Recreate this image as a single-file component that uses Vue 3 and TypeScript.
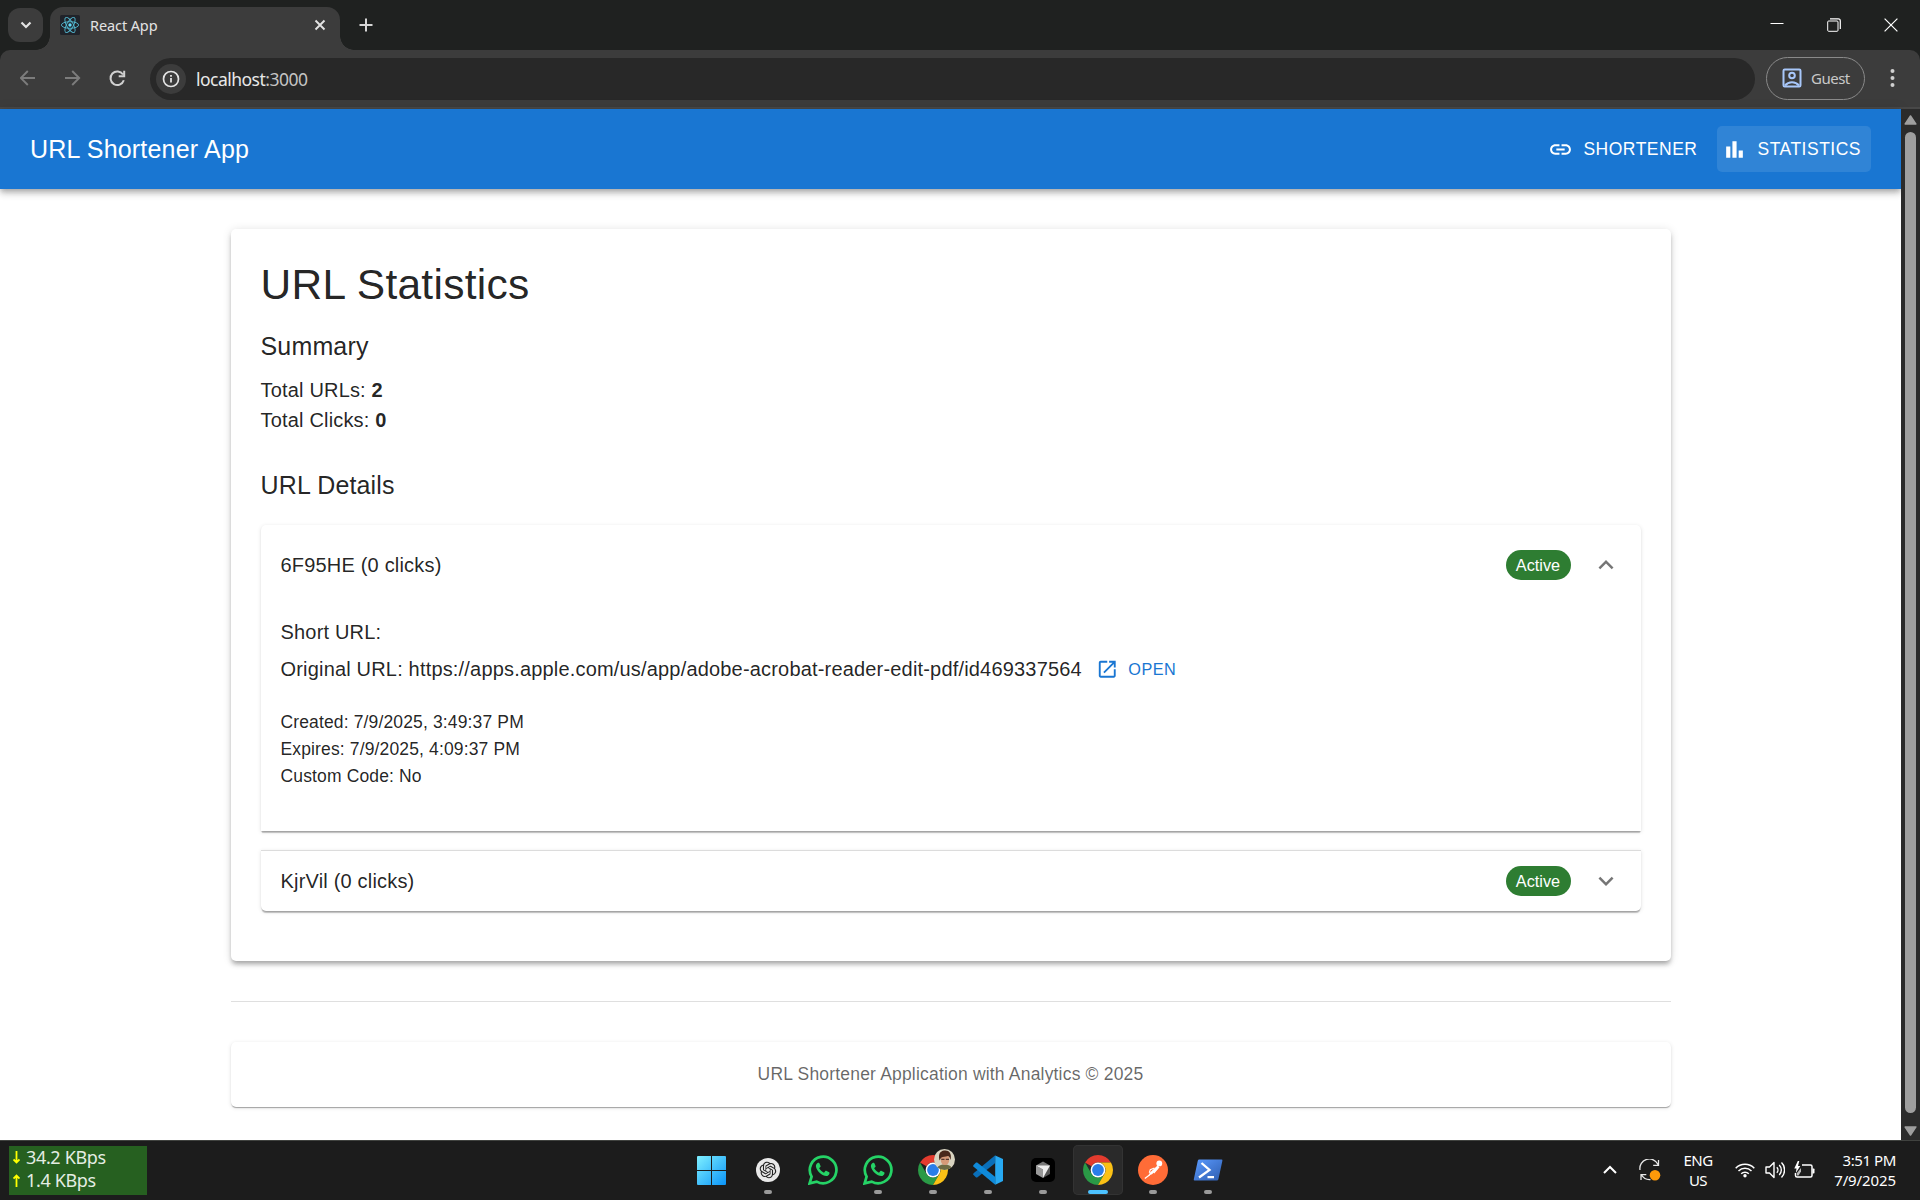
<script setup lang="ts">
import { ref } from 'vue'

interface UrlEntry {
  code: string
  clicks: number
  original: string
  created: string
  expires: string
  custom: boolean
  expanded: boolean
}

interface TaskItem {
  id: string
  icon: string
  running?: boolean
  active?: boolean
}

const urls = ref<UrlEntry[]>([
  {
    code: '6F95HE',
    clicks: 0,
    original: 'https://apps.apple.com/us/app/adobe-acrobat-reader-edit-pdf/id469337564',
    created: '7/9/2025, 3:49:37 PM',
    expires: '7/9/2025, 4:09:37 PM',
    custom: false,
    expanded: true,
  },
  {
    code: 'KjrVil',
    clicks: 0,
    original: '',
    created: '',
    expires: '',
    custom: false,
    expanded: false,
  },
])

const tasks: TaskItem[] = [
  { id: 'start', icon: 'windows' },
  { id: 'chatgpt', icon: 'openai', running: true },
  { id: 'wa1', icon: 'whatsapp' },
  { id: 'wa2', icon: 'whatsapp', running: true },
  { id: 'chrome-profile', icon: 'chrome-profile', running: true },
  { id: 'vscode', icon: 'vscode', running: true },
  { id: 'cursor', icon: 'cursor', running: true },
  { id: 'chrome', icon: 'chrome', running: true, active: true },
  { id: 'postman', icon: 'postman', running: true },
  { id: 'powershell', icon: 'powershell', running: true },
]
</script>

<template>
  <div class="screen">
    <!-- Browser tab strip -->
    <div class="tabstrip">
      <div class="tab-search">
        <svg width="12" height="8" viewBox="0 0 12 8"><path d="M1.5 1.5 6 6l4.500-4.500" fill="none" stroke="#e3e3e3" stroke-width="2.200" /></svg>
      </div>
      <div class="tab">
        <svg class="favicon" width="20" height="20" viewBox="0 0 20 20">
          <rect width="20" height="20" rx="1.500" fill="#20232a" />
          <g fill="none" stroke="#53b9d1" stroke-width="0.900">
            <ellipse cx="10" cy="10" rx="8.600" ry="3.300" />
            <ellipse cx="10" cy="10" rx="8.600" ry="3.300" transform="rotate(60 10 10)" />
            <ellipse cx="10" cy="10" rx="8.600" ry="3.300" transform="rotate(120 10 10)" />
          </g>
          <circle cx="10" cy="10" r="1.700" fill="#61dafb" />
        </svg>
        <span class="tab-title">React App</span>
        <svg class="tab-close" width="12" height="12" viewBox="0 0 12 12"><path d="M1.500 1.500l9 9M10.500 1.500l-9 9" stroke="#e3e3e3" stroke-width="1.900" /></svg>
      </div>
      <svg class="new-tab" width="14" height="14" viewBox="0 0 14 14"><path d="M7 .5v13M.5 7h13" stroke="#d6d6d6" stroke-width="2" /></svg>
      <div class="window-controls">
        <svg width="14" height="14" viewBox="0 0 14 14"><path d="M.5 5.500h13" stroke="#fff" /></svg>
        <svg width="14" height="14" viewBox="0 0 14 14" fill="none" stroke="#fff"><rect x=".7" y="3" width="10.300" height="10.300" rx="1" /><path d="M3 .9h8.300a2 2 0 0 1 2 2v8" stroke-width="1.200" /></svg>
        <svg width="14" height="14" viewBox="0 0 14 14"><path d="M.6.6l12.800 12.800M13.400.6.600 13.400" stroke="#fff" stroke-width="1.200" /></svg>
      </div>
    </div>

    <!-- Address bar -->
    <div class="toolbar">
      <svg class="nav-icon" width="16" height="16" viewBox="0 0 16 16" fill="none" stroke="#7c7c7c" stroke-width="1.900"><path d="M15 8H1.500M7.800 1 .8 8l7 7" /></svg>
      <svg class="nav-icon" width="16" height="16" viewBox="0 0 16 16" fill="none" stroke="#7c7c7c" stroke-width="1.900"><path d="M0 8H13.500M7.200 1l7 7-7 7" /></svg>
      <svg class="nav-icon reload" width="17" height="17" viewBox="0 0 17 17" fill="none" stroke="#d0d0d0" stroke-width="2"><path d="M14.800 10.300A6.800 6.800 0 1 1 14 4.500M15.200 .8v5.400H9.700" /></svg>
      <div class="omnibox">
        <span class="site-info">
          <svg width="18" height="18" viewBox="0 0 18 18"><circle cx="9" cy="9" r="7.500" fill="none" stroke="#e3e3e3" stroke-width="1.700" /><path d="M9 8v4.500M9 5v1.800" stroke="#e3e3e3" stroke-width="1.800" /></svg>
        </span>
        <span class="url">localhost<span class="port">:3000</span></span>
      </div>
      <div class="guest">
        <svg width="20" height="20" viewBox="0 0 20 20" fill="none" stroke="#a8c7fa" stroke-width="2"><rect x="1.500" y="1.500" width="17" height="17" rx="1.200" /><circle cx="10" cy="7.500" r="2.800" /><path d="M3 17.500c2-2.400 4.200-3.200 7-3.200s5 .8 7 3.200" /></svg>
        <span>Guest</span>
      </div>
      <svg class="more" width="5" height="20" viewBox="0 0 5 20" fill="#d0d0d0"><circle cx="2.500" cy="3" r="2" /><circle cx="2.500" cy="10" r="2" /><circle cx="2.500" cy="17" r="2" /></svg>
    </div>

    <div class="viewport">
      <main class="page">
        <header class="appbar">
          <span class="brand">URL Shortener App</span>
          <button class="nav-btn">
            <svg width="25" height="25" viewBox="0 0 24 24" fill="#fff"><path d="M3.900 12c0-1.710 1.390-3.100 3.100-3.100h4V7H7c-2.760 0-5 2.240-5 5s2.240 5 5 5h4v-1.900H7c-1.710 0-3.100-1.390-3.100-3.100zM8 13h8v-2H8v2zm9-6h-4v1.900h4c1.710 0 3.100 1.390 3.100 3.100s-1.390 3.100-3.100 3.100h-4V17h4c2.760 0 5-2.240 5-5s-2.240-5-5-5z" /></svg>
            SHORTENER
          </button>
          <button class="nav-btn selected">
            <svg width="25" height="25" viewBox="0 0 24 24" fill="#fff"><path d="M4 9h4v11H4zm12 4h4v7h-4zm-6-9h4v16h-4z" /></svg>
            STATISTICS
          </button>
        </header>

        <div class="container">
          <section class="card">
            <h1>URL Statistics</h1>
            <h2>Summary</h2>
            <p class="body">Total URLs: <strong>2</strong></p>
            <p class="body">Total Clicks: <strong>0</strong></p>
            <h2 class="details-title">URL Details</h2>

            <div class="accordions">
              <article v-for="u in urls" :key="u.code" class="accordion" :class="{ expanded: u.expanded }">
                <div class="summary" @click="u.expanded = !u.expanded">
                  <span class="summary-title">{{ u.code }} ({{ u.clicks }} clicks)</span>
                  <span class="chip">Active</span>
                  <svg class="chevron" width="30" height="30" viewBox="0 0 24 24"><path d="M16.590 8.590 12 13.170 7.410 8.590 6 10l6 6 6-6z" /></svg>
                </div>
                <div v-if="u.expanded" class="details">
                  <p class="body">Short URL:</p>
                  <div class="original">
                    <p class="body">Original URL: {{ u.original }}</p>
                    <button class="open-btn">
                      <svg width="22.500" height="22.500" viewBox="0 0 24 24" fill="#1976d2"><path d="M19 19H5V5h7V3H5c-1.110 0-2 .9-2 2v14c0 1.100.890 2 2 2h14c1.100 0 2-.9 2-2v-7h-2v7zM14 3v2h3.590l-9.830 9.830 1.410 1.410L19 6.410V10h2V3h-7z" /></svg>
                      OPEN
                    </button>
                  </div>
                  <div class="meta">
                    <p>Created: {{ u.created }}</p>
                    <p>Expires: {{ u.expires }}</p>
                    <p>Custom Code: {{ u.custom ? 'Yes' : 'No' }}</p>
                  </div>
                </div>
              </article>
            </div>
          </section>

          <hr class="divider" />
          <footer class="footer">URL Shortener Application with Analytics © 2025</footer>
        </div>
      </main>
      <div class="scrollbar">
        <svg width="13" height="10" viewBox="0 0 13 10"><path d="M6.500 1 11.800 9H1.200z" fill="#9f9f9f" stroke="#9f9f9f" stroke-width="1.500" stroke-linejoin="round" /></svg>
        <div class="thumb"></div>
        <svg width="13" height="10" viewBox="0 0 13 10"><path d="M6.500 9 11.800 1H1.200z" fill="#9f9f9f" stroke="#9f9f9f" stroke-width="1.500" stroke-linejoin="round" /></svg>
      </div>
    </div>

    <!-- Windows taskbar -->
    <div class="taskbar">
      <div class="netmeter">
        <div><svg width="7" height="13" viewBox="0 0 7 13"><path d="M3.500 0v11M.5 8.500l3 3 3-3" fill="none" stroke="#ff0" stroke-width="1.800" /></svg>34.2 KBps</div>
        <div><svg width="7" height="13" viewBox="0 0 7 13"><path d="M3.500 13V2M.5 4.500l3-3 3 3" fill="none" stroke="#ff0" stroke-width="1.800" /></svg>1.4 KBps</div>
      </div>
      <div class="tasks">
        <div v-for="t in tasks" :key="t.id" class="task" :class="[t.id, { active: t.active, running: t.running }]">
          <svg v-if="t.icon === 'windows'" width="29" height="29" viewBox="0 0 29 29">
            <defs><linearGradient id="win" x1="0" y1="0" x2="1" y2="1" gradientUnits="objectBoundingBox"><stop offset="0" stop-color="#7ff0ff" /><stop offset="1" stop-color="#0a94f8" /></linearGradient></defs>
            <path d="M1 0h13v14H0V1a1 1 0 0 1 1-1zM15 0h13a1 1 0 0 1 1 1v13H15zM0 15h14v14H1a1 1 0 0 1-1-1zM15 15h14v13a1 1 0 0 1-1 1H15z" fill="url(#win)" />
          </svg>
          <svg v-else-if="t.icon === 'openai'" width="24" height="24" viewBox="0 0 24 24">
            <circle cx="12" cy="12" r="12" fill="#e9e9e9" />
            <g transform="translate(3.700 3.700) scale(.69)"><path fill="#222" d="M22.282 9.821a5.985 5.985 0 0 0-.516-4.911 6.046 6.046 0 0 0-6.510-2.900A6.065 6.065 0 0 0 4.981 4.182a5.985 5.985 0 0 0-3.998 2.900 6.046 6.046 0 0 0 .743 7.097 5.980 5.980 0 0 0 .511 4.911 6.051 6.051 0 0 0 6.515 2.900A5.985 5.985 0 0 0 13.260 24a6.056 6.056 0 0 0 5.772-4.206 5.989 5.989 0 0 0 3.998-2.900 6.056 6.056 0 0 0-.748-7.073zm-9.022 12.608a4.476 4.476 0 0 1-2.876-1.041l.142-.080 4.778-2.758a.795.795 0 0 0 .393-.681v-6.737l2.020 1.169a.071.071 0 0 1 .038.052v5.583a4.504 4.504 0 0 1-4.495 4.494zm-9.661-4.125a4.471 4.471 0 0 1-.535-3.014l.142.085 4.783 2.758a.771.771 0 0 0 .781 0l5.843-3.369v2.332a.080.080 0 0 1-.033.062L9.740 19.950a4.499 4.499 0 0 1-6.141-1.646zM2.341 7.896a4.485 4.485 0 0 1 2.366-1.973V11.600a.766.766 0 0 0 .388.677l5.814 3.354-2.020 1.169a.076.076 0 0 1-.071 0l-4.830-2.787A4.504 4.504 0 0 1 2.341 7.872zm16.596 3.856L13.104 8.364 15.119 7.200a.076.076 0 0 1 .071 0l4.830 2.791a4.494 4.494 0 0 1-.677 8.104v-5.677a.790.790 0 0 0-.407-.667zm2.011-3.023l-.142-.085-4.774-2.782a.776.776 0 0 0-.785 0L9.409 9.230V6.897a.066.066 0 0 1 .028-.062l4.830-2.787a4.499 4.499 0 0 1 6.680 4.660zM8.307 12.863l-2.020-1.164a.080.080 0 0 1-.038-.057V6.074a4.499 4.499 0 0 1 7.376-3.454l-.142.081L8.704 5.459a.795.795 0 0 0-.393.681zm1.098-2.365l2.602-1.500 2.607 1.500v2.999l-2.597 1.500-2.607-1.500z" /></g>
          </svg>
          <svg v-else-if="t.icon === 'whatsapp'" width="30" height="30" viewBox="0 0 30 30">
            <path d="M1.600 28.400 3.600 21.600A13.300 13.300 0 1 1 8.700 26.600z" fill="none" stroke="#25d366" stroke-width="2.700" />
            <path transform="translate(5.300 5) scale(.78)" fill="#25d366" d="M7.500 10.500c1.300 2.400 3.500 4.500 6.200 5.700l1.800-2.100c.3-.4.7-.4 1.100-.2l3.700 1.800c.5.300.6.6.5 1.200-.4 2.400-2.200 3.600-4.100 3.700C11.800 20.600 3.900 14.200 3.300 8c0-2 1-3.500 2.300-4.200.5-.2 1.300-.2 1.800 0 .4.200.5.500.7.900l1.200 3c.2.400.1.700-.1 1z" />
          </svg>
          <svg v-else-if="t.icon === 'chrome' || t.icon === 'chrome-profile'" width="30" height="30" viewBox="0 0 30 30">
            <path d="M2.010 7.500A15 15 0 0 1 27.990 7.500H15A7.500 7.500 0 0 0 8.500 11.250z" fill="#e33b2e" />
            <path d="M2.010 7.500A15 15 0 0 0 15 30L21.500 18.750A7.500 7.500 0 0 1 8.500 18.750z" fill="#2a9a46" />
            <path d="M27.990 7.500A15 15 0 0 1 15 30L21.500 18.750A7.500 7.500 0 0 0 15 7.500z" fill="#fbc116" />
            <circle cx="15" cy="15" r="7.400" fill="#fff" /><circle cx="15" cy="15" r="5.900" fill="#2b7de9" />
          </svg>
          <svg v-else-if="t.icon === 'vscode'" width="30" height="30" viewBox="0 0 30 30">
            <path d="M22.200.5 30 4v22l-7.800 3.700z" fill="#27a9f2" />
            <path d="M22.200.3 22 8.300 4.500 22.200c-.6.400-1.200.4-1.700 0L.6 20.100c-.6-.6-.6-1.300 0-1.900z" fill="#0a6fb9" />
            <path d="M22.200 29.700 22 21.700 4.500 7.800c-.6-.4-1.200-.4-1.700 0L.6 9.900c-.6.6-.6 1.300 0 1.900z" fill="#0f8ada" />
          </svg>
          <svg v-else-if="t.icon === 'cursor'" width="24" height="24" viewBox="0 0 24 24">
            <rect width="24" height="24" rx="5" fill="#000" />
            <path d="M12 3.500 19 7.500 12 11.500 5 7.500z" fill="#777" /><path d="M5 7.500 12 11.500V20l-7-4z" fill="#999" /><path d="M19 7.500v8.500L12 20v-8.500z" fill="#555" /><path d="M5 7.500h14L12 20v-8.500z" fill="#eee" />
          </svg>
          <svg v-else-if="t.icon === 'postman'" width="30" height="30" viewBox="0 0 30 30">
            <circle cx="15" cy="15" r="15" fill="#ff6c37" /><circle cx="21.300" cy="8.400" r="2.900" fill="#fff" />
            <path d="M19.800 10.200 12 17.600l-1.700 3.200 3.700-1.500 7.500-6.800z" fill="#fff" /><path d="M11.800 19.800 6.800 23.500M16.500 13l-4.200 1.700-1 3M20 13l-4.200 5" stroke="#fff" stroke-width="1.200" fill="none" />
          </svg>
          <svg v-else width="30" height="24" viewBox="0 0 30 24">
            <defs><linearGradient id="ps" x1="0" y1="0" x2="1" y2="1"><stop offset="0" stop-color="#5b9bff" /><stop offset="1" stop-color="#2d5cae" /></linearGradient></defs>
            <path d="M6.300 1.500h22.200q1.200 0 .9 1.200l-4 18.600q-.3 1.200-1.500 1.200H1.700q-1.200 0-.9-1.200l4-18.600q.3-1.200 1.500-1.200z" fill="url(#ps)" />
            <path d="M8.500 5l8 7-10.500 7.500M14.500 19.200h6.500" stroke="#fff" stroke-width="2.300" fill="none" />
          </svg>
          <svg v-if="t.icon === 'chrome-profile'" class="avatar" width="21" height="21" viewBox="0 0 21 21">
            <clipPath id="av"><circle cx="10.500" cy="10.500" r="10.500" /></clipPath>
            <g clip-path="url(#av)"><rect width="21" height="21" fill="#d8d3c0" /><path d="M2.500 21c.5-4 4-5.500 8-5.500s7.500 1.500 8 5.500z" fill="#6d6b43" /><ellipse cx="11" cy="10.500" rx="4.300" ry="5.500" fill="#d69a78" /><path d="M5.500 11.500C3.500 3 8 1.500 11.500 1.500s6.500 3 5 9.500c-.7-2.500-1.200-3.500-2.500-4-3 1-5 .5-6.500 1.500-1 .7-1 1.800-2 3z" fill="#49291b" /><path d="M7.300 10.300h3.200M11.800 10.300H15" stroke="#55372d" stroke-width="1.300" /></g>
          </svg>
          <i v-if="t.running" class="indicator"></i>
        </div>
      </div>
      <div class="tray">
        <svg class="t-up" width="14" height="9" viewBox="0 0 14 9"><path d="M1 8l6-6 6 6" fill="none" stroke="#fff" stroke-width="2" /></svg>
        <svg class="t-sync" width="22" height="22" viewBox="0 0 22 22"><g fill="none" stroke="#e8e8e8" stroke-width="1.300"><path d="M1 11A9.500 9.500 0 0 1 19 5.500M19.500 1v5.300h-5.300M2 21v-5.300h5.300M2.500 16a9.500 9.500 0 0 0 9 4.500" /></g><circle cx="16" cy="16.200" r="5.300" fill="#ff9a0a" /></svg>
        <div class="lang"><span>ENG</span><span>US</span></div>
        <svg class="t-wifi" width="20" height="16" viewBox="0 0 20 16"><g fill="none" stroke="#fff" stroke-width="1.500"><path d="M.7 6.200a13 13 0 0 1 18.600 0M3.500 9a9.200 9.200 0 0 1 13 0M6.200 11.800a5.400 5.400 0 0 1 7.600 0" /></g><circle cx="10" cy="13.800" r="1.700" fill="#fff" /></svg>
        <svg class="t-vol" width="20" height="18" viewBox="0 0 20 18"><g fill="none" stroke="#fff" stroke-width="1.400" stroke-linejoin="round"><path d="M1 6h3.500L9 1.500v15L4.500 12H1zM11.800 6.200a4 4 0 0 1 0 5.600M14.200 3.900a7.200 7.200 0 0 1 0 10.200M16.500 1.600a10.500 10.500 0 0 1 0 14.800" /></g></svg>
        <svg class="t-bat" width="21" height="18" viewBox="0 0 21 18"><path d="M8 4h8.500q1.500 0 1.500 1.500v9q0 1.500-1.500 1.500H3q-1.500 0-1.500-1.500V12" fill="none" stroke="#fff" stroke-width="1.500" /><path d="M18.500 7.500h1.200q.8 0 .8.800v3.400q0 .8-.8.800h-1.200z" fill="#fff" /><path d="M3.800 0 .3 7.500h2.200L1.800 12 6.300 5H4L5.300 0z" fill="#fff" /><path d="M3 14.500V12l4-5v3.500L4.500 14.500z" fill="#bbb" /></svg>
        <div class="clock"><span>3:51 PM</span><span class="date">7/9/2025</span></div>
      </div>
    </div>
  </div>
</template>

<style>
body {
  margin: 0;
  overflow: hidden;
}
</style>

<style scoped>
.screen {
  width: 1920px;
  height: 1200px;
  display: flex;
  flex-direction: column;
  overflow: hidden;
  font-family: "Liberation Sans", Arial, sans-serif;
  background: #1f2120;
}
svg {
  display: block;
  flex: none;
}
.tabstrip,
.toolbar,
.taskbar {
  font-family: "Noto Sans", "Open Sans", sans-serif;
}

/* tab strip */
.tabstrip {
  height: 50px;
  display: flex;
  flex: none;
  align-items: flex-start;
  background: #1f2120;
}
.tab-search {
  width: 35px;
  height: 34px;
  margin: 8px 7px 0 8px;
  border-radius: 12px;
  background: #3c3c3c;
  display: flex;
  align-items: center;
  justify-content: center;
}
.tab {
  position: relative;
  box-sizing: border-box;
  width: 290px;
  height: 43px;
  margin-top: 7px;
  padding: 0 14px 7px 10px;
  border-radius: 13px 13px 0 0;
  background: #3c3c3c;
  display: flex;
  align-items: center;
}
.tab::before,
.tab::after {
  content: "";
  position: absolute;
  bottom: 0;
  width: 14px;
  height: 14px;
}
.tab::before {
  left: -14px;
  background: radial-gradient(circle at 0 0, transparent 13.500px, #3c3c3c 14px);
}
.tab::after {
  right: -14px;
  background: radial-gradient(circle at 100% 0, transparent 13.500px, #3c3c3c 14px);
}
.tab-title {
  margin-left: 10px;
  flex: 1;
  font-size: 14.500px;
  letter-spacing: -0.100px;
  color: #e3e3e3;
}
.new-tab {
  margin: 18px 0 0 19px;
}
.window-controls {
  margin: 18px 22px 0 auto;
  display: flex;
  gap: 43px;
}

/* toolbar */
.toolbar {
  box-sizing: border-box;
  height: 59px;
  flex: none;
  display: flex;
  align-items: center;
  padding: 0 25px 1px 20px;
  border-bottom: 2px solid #484848;
  border-radius: 10px 10px 0 0;
  background: #3c3c3c;
}
.nav-icon {
  margin-right: 29px;
}
.nav-icon.reload {
  margin-left: -1px;
  margin-right: 24px;
}
.omnibox {
  box-sizing: border-box;
  flex: 1;
  height: 42px;
  margin-top: 2px;
  padding-left: 6px;
  border-radius: 21px;
  background: #282828;
  display: flex;
  align-items: center;
}
.site-info {
  width: 30px;
  height: 30px;
  border-radius: 50%;
  background: #3c3c3c;
  display: flex;
  align-items: center;
  justify-content: center;
}
.url {
  margin-left: 10px;
  font-size: 17.500px;
  letter-spacing: -0.520px;
  color: #e8e8e8;
}
.port {
  color: #c4c4c4;
}
.guest {
  box-sizing: border-box;
  width: 99px;
  height: 43px;
  margin: 1px 25px 0 11px;
  padding: 0 0 1px 15px;
  border: 1px solid #8a8a8a;
  border-radius: 22px;
  display: flex;
  align-items: center;
  gap: 9px;
  font-size: 15px;
  letter-spacing: -0.500px;
  color: #c8c8c8;
}

/* web page */
.viewport {
  height: 1031px;
  flex: none;
  display: flex;
}
.page {
  width: 1901px;
  background: #fff;
  color: rgba(0, 0, 0, 0.87);
}
.appbar {
  box-sizing: border-box;
  height: 80px;
  padding: 0 30px;
  display: flex;
  align-items: center;
  gap: 10px;
  background: #1976d2;
  color: #fff;
  box-shadow: 0 2.500px 5px -1px rgba(0, 0, 0, 0.2), 0 5px 6px 0 rgba(0, 0, 0, 0.14), 0 1px 12px 0 rgba(0, 0, 0, 0.12);
}
.brand {
  flex: 1;
  font-size: 25px;
  line-height: 40px;
  letter-spacing: 0.188px;
}
button {
  border: 0;
  background: none;
  font-family: inherit;
  display: flex;
  align-items: center;
  white-space: nowrap;
}
.nav-btn {
  height: 46px;
  padding: 1px 10px 0 5px;
  gap: 10px;
  border-radius: 5px;
  font-size: 17.500px;
  letter-spacing: 0.500px;
  color: #fff;
}
.nav-btn.selected {
  background: rgba(255, 255, 255, 0.1);
}
.container {
  width: 1440px;
  margin: 0 auto;
  padding-top: 40px;
}
.card {
  box-sizing: border-box;
  height: 732px;
  padding: 30px;
  border-radius: 5px;
  background: #fff;
  box-shadow: 0 4px 4px -2.500px rgba(0, 0, 0, 0.2), 0 4px 5px 0 rgba(0, 0, 0, 0.14), 0 1px 10px 0 rgba(0, 0, 0, 0.12);
}
h1,
h2,
p {
  margin: 0;
  font-weight: 400;
}
h1 {
  font-size: 42.500px;
  line-height: 51.500px;
  letter-spacing: 0.260px;
  margin-bottom: 15px;
}
h2 {
  font-size: 25px;
  line-height: 40px;
  letter-spacing: 0.160px;
  margin-bottom: 9.500px;
}
.body {
  font-size: 20px;
  line-height: 30px;
  letter-spacing: 0.180px;
}
.details-title {
  margin-top: 30px;
  margin-bottom: 20px;
}
.accordion {
  border-radius: 0;
  background: #fff;
  box-shadow: 0 2.500px 1px -1px rgba(0, 0, 0, 0.2), 0 1px 1px 0 rgba(0, 0, 0, 0.14), 0 1px 4px 0 rgba(0, 0, 0, 0.12);
}
.accordion.expanded {
  height: 306px;
  margin-bottom: 19px;
  border-radius: 5px 5px 0 0;
}
.accordion:not(.expanded) {
  border-top: 1px solid #dcdcdc;
  border-radius: 0 0 5px 5px;
}
.summary {
  height: 60px;
  padding: 0 20px;
  display: flex;
  align-items: center;
}
.expanded .summary {
  height: 80px;
}
.summary-title {
  flex: 1;
  font-size: 20px;
  line-height: 30px;
  letter-spacing: 0.188px;
}
.chip {
  box-sizing: border-box;
  width: 65px;
  height: 30px;
  margin-right: 20px;
  border-radius: 15px;
  background: #2e7d32;
  color: #fff;
  font-size: 16.250px;
  line-height: 30px;
  text-align: center;
}
.chevron {
  fill: rgba(0, 0, 0, 0.54);
}
.expanded .chevron {
  transform: rotate(180deg);
}
.details {
  padding: 12px 20px 20px;
}
.original {
  margin-top: 7px;
  display: flex;
  align-items: center;
}
.open-btn {
  height: 30px;
  margin-left: 10px;
  padding: 1px 6px 0 4px;
  gap: 10px;
  font-size: 16.250px;
  letter-spacing: 0.460px;
  color: #1976d2;
}
.meta {
  margin-top: 25px;
  font-size: 17.500px;
  line-height: 27px;
  letter-spacing: 0.140px;
}
.divider {
  height: 1px;
  margin: 40px 0;
  border: 0;
  background: #dfdfdf;
}
.footer {
  height: 65px;
  border-radius: 5px;
  text-align: center;
  font-size: 17.500px;
  line-height: 65px;
  letter-spacing: 0.188px;
  color: rgba(0, 0, 0, 0.6);
  box-shadow: 0 2px 1px -1px rgba(0, 0, 0, 0.2), 0 1px 1px 0 rgba(0, 0, 0, 0.14), 0 1px 4px 0 rgba(0, 0, 0, 0.12);
}
.scrollbar {
  width: 19px;
  box-sizing: border-box;
  padding: 6px 0 4px;
  background: #2b2b2b;
  display: flex;
  flex-direction: column;
  align-items: center;
}
.thumb {
  width: 11px;
  flex: 1;
  margin: 7px 0 13px;
  border-radius: 6px;
  background: #9f9f9f;
}

/* taskbar */
.taskbar {
  box-sizing: border-box;
  height: 60px;
  flex: none;
  border-top: 1px solid #40423f;
  background: #1c1c1c;
  display: flex;
  color: #fff;
}
.netmeter {
  box-sizing: border-box;
  width: 138px;
  height: 49px;
  margin: 5px 0 0 9px;
  padding: 0 0 0 4px;
  background: #266020;
  font-size: 18px;
  line-height: 23px;
  letter-spacing: -0.350px;
  color: #e4ede3;
}
.netmeter div {
  display: flex;
  align-items: center;
  gap: 6px;
}
.tasks {
  margin-left: 537px;
  display: flex;
}
.task {
  position: relative;
  box-sizing: border-box;
  width: 50px;
  height: 50px;
  margin: 4px 2.500px 0;
  border-radius: 5px;
  display: flex;
  align-items: center;
  justify-content: center;
}
.task.start {
  margin-right: 4px;
  padding-top: 1px;
}
.task.active {
  background: #2a2a2a;
  box-shadow: inset 0 0 0 1px #333;
}
.indicator {
  position: absolute;
  left: 21px;
  bottom: 1px;
  width: 8px;
  height: 4px;
  border-radius: 2px;
  background: #9a9a9a;
}
.active .indicator {
  left: 15px;
  width: 20px;
  background: #4cc2ff;
}
.avatar {
  position: absolute;
  left: 26px;
  top: 4px;
}
.tray {
  margin-left: auto;
  margin-right: 24px;
  display: flex;
  align-items: center;
  height: 57px;
  font-size: 15px;
  line-height: 20px;
}
.t-sync {
  margin-left: 22px;
}
.lang {
  width: 40px;
  margin: 0 17px 0 17px;
  display: flex;
  flex-direction: column;
  align-items: center;
  letter-spacing: -0.500px;
}
.t-vol {
  margin-left: 10px;
}
.t-bat {
  margin-left: 9px;
}
.clock {
  width: 81px;
  display: flex;
  flex-direction: column;
  align-items: flex-end;
  letter-spacing: -0.400px;
}
.date {
  letter-spacing: -0.100px;
}
</style>
